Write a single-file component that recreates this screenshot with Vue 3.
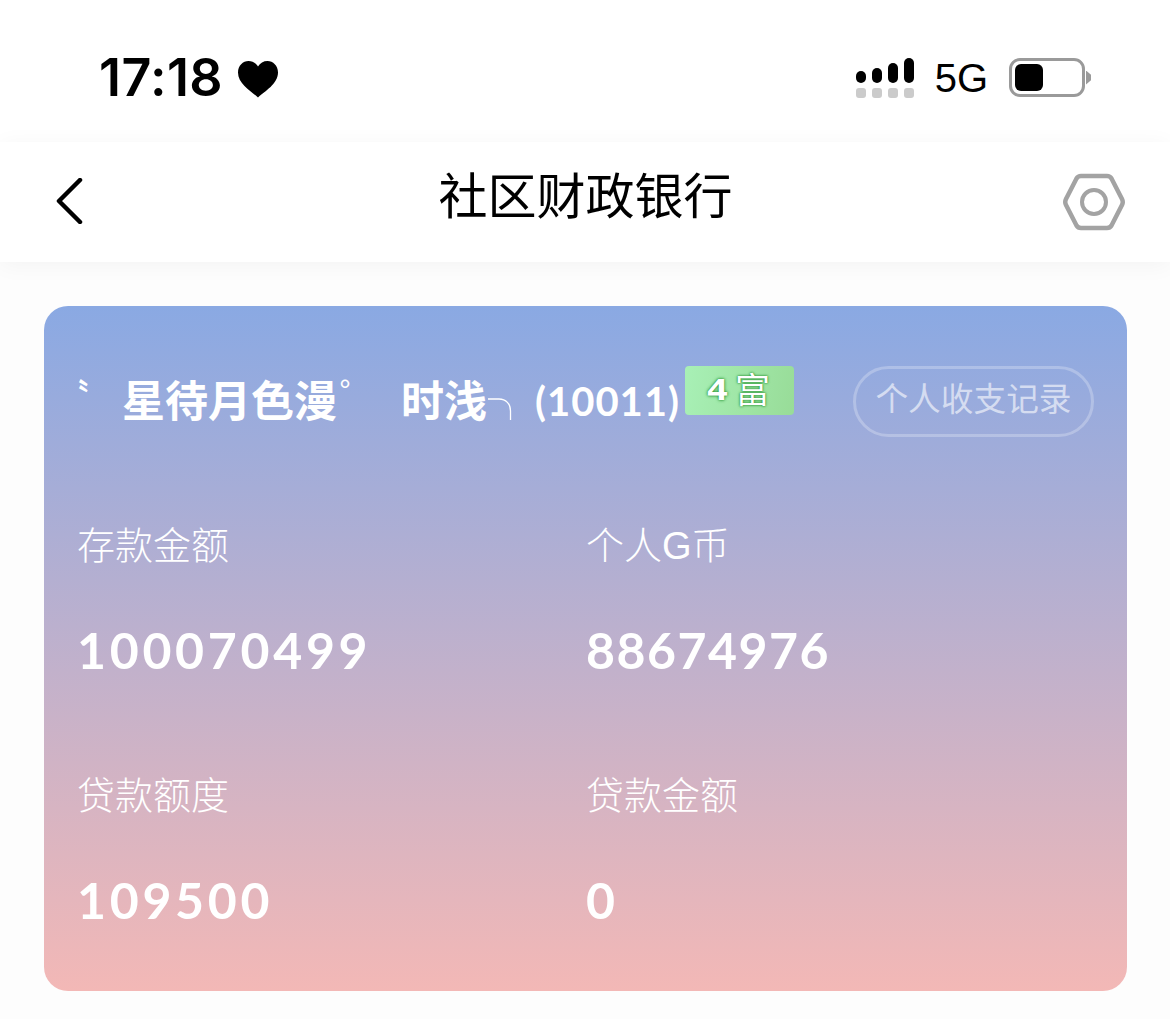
<template>
  <div class="page">
    <div class="status-bar">
      <div class="status-left">
        <span class="time">17:18</span>
        <svg class="heart" width="42" height="38" viewBox="0 0 42 38">
          <path d="M21 37.5C14 31 1 24 1 12.5C1 5.5 6 1 11.5 1C15.5 1 19 3 21 6.5C23 3 26.5 1 30.5 1C36 1 41 5.5 41 12.5C41 24 28 31 21 37.5Z" fill="#000" />
        </svg>
      </div>
      <div class="status-right">
        <div class="signal">
          <div class="signal-col" v-for="(h, i) in bars" :key="i">
            <span class="bar-on" :style="{ height: h + 'px' }"></span>
            <span class="bar-off"></span>
          </div>
        </div>
        <span class="net">5G</span>
        <div class="battery">
          <div class="battery-body"><span class="battery-level"></span></div>
          <span class="battery-tip"></span>
        </div>
      </div>
    </div>

    <div class="nav">
      <svg class="back" width="28" height="46" viewBox="0 0 28 46">
        <path d="M25 2L4 23L25 44" fill="none" stroke="#000" stroke-width="4.5" stroke-linecap="round" stroke-linejoin="round" />
      </svg>
      <div class="nav-title">社区财政银行</div>
      <svg class="settings" width="64" height="58" viewBox="0 0 64 58">
        <path d="M19 3H45Q48 3 49.5 5.5L60 26Q61.5 29 60 32L49.5 52.5Q48 55 45 55H19Q16 55 14.5 52.5L4 32Q2.5 29 4 26L14.5 5.5Q16 3 19 3Z" fill="none" stroke="#a3a3a3" stroke-width="4.5" />
        <circle cx="32" cy="29" r="12" fill="none" stroke="#a3a3a3" stroke-width="4" />
      </svg>
    </div>

    <div class="card">
      <div class="card-head">
        <div class="user">
          <span class="user-mark">〝</span>
          <span class="user-name">星待月色漫<span class="degree">°</span></span>
          <span class="user-name second">时浅</span>
          <svg class="user-hook" width="26" height="24" viewBox="0 0 26 24">
            <path d="M1 3H12C19 3 23.5 8 23.5 15V26" fill="none" stroke="#fff" stroke-width="1.3" />
          </svg>
          <span class="user-id">(10011)</span>
          <div class="badge">
            <span class="badge-num">4</span>
            <span class="badge-text">富</span>
          </div>
        </div>
        <div class="record-btn">个人收支记录</div>
      </div>

      <div class="stats">
        <div class="stat" v-for="item in stats" :key="item.label">
          <div class="stat-label">{{ item.label }}</div>
          <div class="stat-value">{{ item.value }}</div>
        </div>
      </div>
    </div>
  </div>
</template>

<script setup>
const bars = [12, 15, 20, 25]

const stats = [
  { label: '存款金额', value: '100070499' },
  { label: '个人G币', value: '88674976' },
  { label: '贷款额度', value: '109500' },
  { label: '贷款金额', value: '0' }
]
</script>

<style>
html,
body {
  margin: 0;
  background: #fdfdfd;
}
</style>

<style scoped>
.page {
  width: 1170px;
  height: 1019px;
  overflow: hidden;
  background: #fdfdfd;
  font-family: "Liberation Sans", "Noto Sans CJK SC", sans-serif;
  box-sizing: border-box;
}

.status-bar {
  height: 142px;
  background: #fff;
  display: flex;
  align-items: flex-start;
  justify-content: space-between;
  padding: 50px 79px 0 99px;
  box-sizing: border-box;
}

.status-left {
  display: flex;
  align-items: center;
  gap: 14px;
}

.time {
  font-family: Inter, sans-serif;
  font-size: 52px;
  line-height: 56px;
  font-weight: 600;
  letter-spacing: 0.4px;
  color: #000;
}

.heart {
  margin-top: 1px;
}

.status-right {
  display: flex;
  align-items: flex-start;
  padding-top: 7px;
}

.signal {
  display: flex;
  gap: 6px;
}

.signal-col {
  width: 10px;
  height: 41px;
  display: flex;
  flex-direction: column;
  justify-content: flex-end;
  gap: 5px;
}

.bar-on {
  display: block;
  background: #000;
  border-radius: 5px;
}

.bar-off {
  display: block;
  height: 10px;
  background: #cbcbcb;
  border-radius: 3px;
}

.net {
  font-family: "Liberation Sans", sans-serif;
  font-size: 40px;
  line-height: 42px;
  color: #000;
  margin-left: 21px;
}

.battery {
  display: flex;
  align-items: center;
  margin-left: 21px;
  margin-top: 1px;
}

.battery-body {
  width: 76px;
  height: 39px;
  border: 3px solid #9a9a9a;
  border-radius: 11px;
  box-sizing: border-box;
  padding: 3px;
}

.battery-level {
  display: block;
  width: 28px;
  height: 27px;
  background: #000;
  border-radius: 6px;
}

.battery-tip {
  width: 5px;
  height: 14px;
  background: #9a9a9a;
  margin-left: 1px;
  clip-path: polygon(0 0, 100% 30%, 100% 70%, 0 100%);
}

.nav {
  height: 120px;
  background: #fff;
  display: flex;
  align-items: center;
  justify-content: space-between;
  padding: 0 44px 0 55px;
  box-sizing: border-box;
  box-shadow: 0 3px 22px rgba(0, 0, 0, 0.045);
  position: relative;
}

.nav-title {
  font-size: 49px;
  color: #000;
  line-height: 60px;
  margin-left: 26px;
  margin-top: -10px;
}

.back {
  margin-top: -2px;
}

.card {
  margin: 44px 43px 0 44px;
  height: 685px;
  border-radius: 24px;
  background: linear-gradient(180deg, #8aa9e3 0%, #f3b8b6 100%);
  padding: 60px 33px 0 33px;
  box-sizing: border-box;
  color: #fff;
}

.card-head {
  display: flex;
  justify-content: space-between;
  align-items: flex-start;
  height: 70px;
}

.user {
  display: flex;
  align-items: flex-start;
  font-weight: 700;
}

.user-mark {
  font-size: 30px;
  line-height: 58px;
  width: 63px;
  margin-left: -18px;
}

.user-name {
  font-size: 43px;
  line-height: 72px;
  white-space: pre;
}

.degree {
  font-size: 30px;
  font-weight: 400;
  line-height: 0;
  margin-left: 2px;
  vertical-align: 17px;
}

.second {
  margin-left: 50px;
}

.user-hook {
  margin-top: 30px;
}

.user-id {
  font-family: Lato, "Open Sans", sans-serif;
  font-size: 40px;
  line-height: 70px;
  font-weight: 700;
  letter-spacing: 1px;
  margin-left: 22px;
}

.badge {
  width: 109px;
  height: 49px;
  margin-left: 5px;
  border-radius: 4px;
  background: linear-gradient(100deg, #a8f0b6, #98dc98);
  display: flex;
  align-items: center;
  justify-content: center;
  gap: 9px;
  color: #fff;
  font-weight: 700;
  text-shadow: 0 0 2px #2e9a3a, 0 0 3px #2e9a3a;
}

.badge-num {
  font-family: "DejaVu Sans Mono", monospace;
  font-size: 28px;
  line-height: 40px;
  transform: scaleX(1.35);
}

.badge-text {
  font-size: 35px;
  line-height: 40px;
  font-weight: 400;
}

.record-btn {
  width: 241px;
  height: 71px;
  border: 3px solid rgba(255, 255, 255, 0.25);
  border-radius: 36px;
  box-sizing: border-box;
  color: rgba(255, 255, 255, 0.6);
  font-size: 32.7px;
  line-height: 62px;
  text-align: center;
}

.stats {
  display: grid;
  grid-template-columns: 509px 1fr;
  margin-top: 81px;
  row-gap: 38px;
}

.stat {
  height: 212px;
}

.stat-label {
  font-size: 38px;
  line-height: 58px;
  font-weight: 300;
  color: #fff;
}

.stat-value {
  font-family: Lato, sans-serif;
  font-size: 50px;
  line-height: 60px;
  font-weight: 700;
  margin-top: 45px;
  letter-spacing: 1.5px;
  color: #fff;
}

.stat:nth-child(odd) .stat-value {
  letter-spacing: 3.7px;
}
</style>
